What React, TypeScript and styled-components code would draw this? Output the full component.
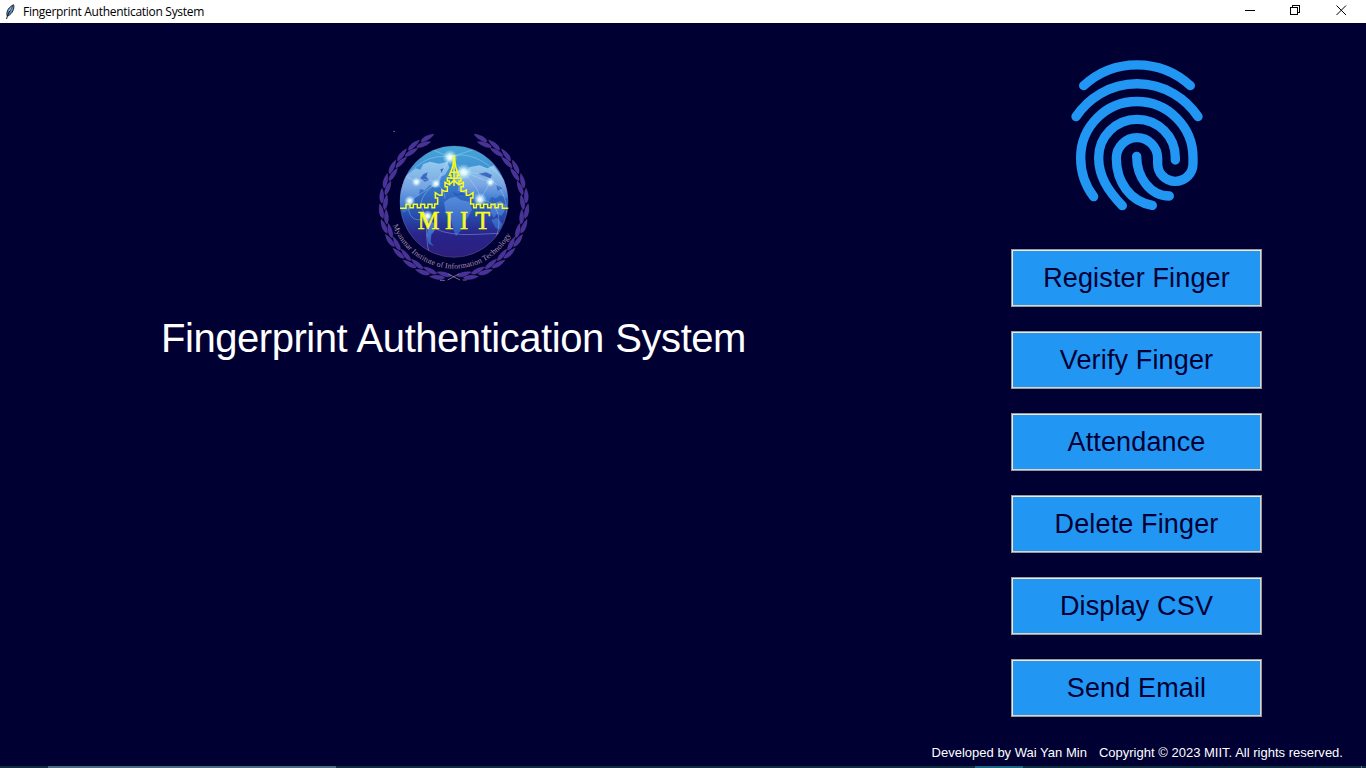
import React from "react";
import styled, { createGlobalStyle } from "styled-components";

const NAVY = "#000033";
const BLUE = "#2196f3";

const GlobalStyle = createGlobalStyle`
  * { box-sizing: border-box; }
  body { margin: 0; background: ${NAVY}; overflow: hidden; }
`;

const Window = styled.div`
  width: 1366px;
  height: 768px;
  display: flex;
  flex-direction: column;
  background: ${NAVY};
  font-family: "Liberation Sans", Arial, sans-serif;
`;

const TitleBar = styled.header`
  height: 23px;
  flex: none;
  display: flex;
  align-items: center;
  padding: 0 2px 0 3px;
  background: #fff;
  color: #000;
`;

const WindowTitle = styled.span`
  flex: 1;
  margin-left: 4px;
  font: 12px/22px "Open Sans", "Noto Sans", sans-serif;
  letter-spacing: -0.29px;
`;

const ControlButton = styled.button`
  width: 45.5px;
  height: 23px;
  padding: 0 0 2px;
  border: 0;
  background: none;
  display: flex;
  align-items: center;
  justify-content: center;
`;

const Content = styled.main`
  flex: 1;
  display: flex;
  min-height: 0;
`;

const Brand = styled.section`
  width: 908px;
  display: flex;
  flex-direction: column;
  align-items: center;
  padding-top: 99px;
`;

const Heading = styled.h1`
  margin: 26px 1px 0 0;
  font-size: 40px;
  line-height: 52px;
  font-weight: 400;
  letter-spacing: -0.46px;
  word-spacing: 1px;
  color: #fff;
  white-space: nowrap;
`;

const Panel = styled.section`
  width: 458px;
  display: flex;
  flex-direction: column;
  align-items: center;
  padding-top: 27px;
`;

const Menu = styled.nav`
  display: flex;
  flex-direction: column;
  gap: 24px;
  margin: 29px 1px 0 0;
`;

const MenuButton = styled.button`
  width: 251px;
  height: 58px;
  padding: 1px 0 0;
  border: 1px solid #9b9a98;
  box-shadow: inset 1px 1px #f3ebe2, inset -1px -1px #d9d4cc;
  background: ${BLUE};
  color: ${NAVY};
  font: 27px "Liberation Sans", Arial, sans-serif;
  letter-spacing: 0.14px;
`;

const Footer = styled.footer`
  align-self: flex-end;
  display: flex;
  gap: 12px;
  margin: 27px 23px 0 0;
  color: #fff;
  font-size: 13px;
  line-height: 17px;
  letter-spacing: 0.01px;
  white-space: nowrap;
`;

const TaskStrip = styled.div`
  height: 2px;
  flex: none;
  display: flex;
  background: #0b2f40;
`;

const TaskSegment = styled.div<{ $width: number; $color?: string }>`
  width: ${(p) => p.$width}px;
  background: ${(p) => p.$color ?? "transparent"};
`;

function Feather() {
  return (
    <svg width="16" height="18" viewBox="0 0 16 18">
      <path d="M4.2 13C2.800 8.500 6 3.700 10.600 1.800C11.700 5.500 9.500 10.500 5 13Z" fill="#5d8fc4" stroke="#20252d" strokeWidth="1" />
      <path d="M3.500 16C4.500 12 6.500 8 9.400 3.500" fill="none" stroke="#111a28" strokeWidth="1" />
      <path d="M6 8L8.400 4.500" stroke="#a8d0f0" strokeWidth="1" />
    </svg>
  );
}

function Fingerprint() {
  return (
    <svg width="155" height="170" viewBox="0 0 465 510">
      <g fill="none" stroke={BLUE} strokeWidth="28" strokeLinecap="round" strokeLinejoin="round">
        <path d="M71 107A236 236 0 0 1 391 107" />
        <path d="M48 200A219 219 0 0 1 414 200" />
        <path d="M101 440C76 407 62 371 62 323A168.5 168.5 0 0 1 399 323V341A53 53 0 0 1 293 341V325A62 62 0 0 0 169 325C169 397 211 454 277 466" />
        <path d="M187 467C143 421 116 378 116 323A115 115 0 0 1 346 323V330" />
        <path d="M230 319C230 381 270 438 328 438" />
      </g>
    </svg>
  );
}

type Leaf = { x: number; y: number; rotate: number };

const wreath: Leaf[] = [];
for (let i = 0; i < 13; i++) {
  for (const side of [-1, 1]) {
    const deg = 98 + i * 12.1 + (side > 0 ? 5 : 0);
    const a = (deg * Math.PI) / 180;
    const r = 212 + side * 6.5;
    wreath.push({
      x: 252 + Math.cos(a) * r,
      y: 252 + Math.sin(a) * (r + 1),
      rotate: deg + 90 - side * 7,
    });
  }
}

const Branch = () => (
  <g fill="#48309f" stroke="#75608f" strokeWidth="1.2" strokeOpacity=".7">
    {wreath.map((l, i) => (
      <path
        key={i}
        d="M-21 1C-14 -8 4 -9 24 0C10 7 -10 8 -21 1Z"
        transform={`translate(${l.x} ${l.y}) rotate(${l.rotate})`}
      />
    ))}
  </g>
);

const halfTemple =
  "M90 259H108V247H120V257H130V247H142V257H152V247H164V257H174V247H186V257H194V246H203V228H196V212L208 220H216V204L224 208H232V194H225V181L238 188V177H232V168H243V160H238L244 146L249 130L252 99";

function Emblem() {
  return (
    <svg width="170" height="164" viewBox="-3 0 510 492">
      <defs>
        <linearGradient id="sea" x1="0" y1="0" x2="0" y2="1">
          <stop offset="0" stopColor="#45acd8" />
          <stop offset=".3" stopColor="#4087d3" />
          <stop offset=".58" stopColor="#2754b4" />
          <stop offset=".77" stopColor="#29258b" />
          <stop offset="1" stopColor="#2d1d7a" />
        </linearGradient>
        <linearGradient id="land" x1="0" y1="0" x2="0" y2="1">
          <stop offset="0" stopColor="#a6d6f2" />
          <stop offset=".5" stopColor="#86aee8" />
          <stop offset="1" stopColor="#2d73d0" />
        </linearGradient>
        <linearGradient id="southLand" x1="0" y1="0" x2="0" y2="1">
          <stop offset="0" stopColor="#5f91df" />
          <stop offset="1" stopColor="#2c65c4" />
        </linearGradient>
        <radialGradient id="glow">
          <stop offset="0" stopColor="#fff" />
          <stop offset=".3" stopColor="#eaffff" stopOpacity=".9" />
          <stop offset="1" stopColor="#a8e8ff" stopOpacity="0" />
        </radialGradient>
        <clipPath id="globe"><ellipse cx="252" cy="239" rx="162" ry="167" /></clipPath>
        <clipPath id="frame"><path d="M0 28H510V474H0Z" /></clipPath>
        <path id="motto" d="M56 239A196 201 0 0 0 448 239" />
      </defs>
      <g clipPath="url(#frame)">
        <Branch />
        <g transform="matrix(-1 0 0 1 504 0)"><Branch /></g>
      </g>
      <path d="M210 475H225M233 474L268 455M270 474L235 456M278 474H290" stroke="#a99abd" strokeWidth="2" />
      <path d="M70 28H75" stroke="#aaa" strokeWidth="2" />
      <g clipPath="url(#globe)">
        <path d="M80 60H430V420H80Z" fill="url(#sea)" />
        <g fill="url(#land)" opacity=".82">
          <path d="M88 202L103 166L137 139L151 143L160 126L180 119L207 125L232 119L238 137L225 158L214 164L206 188L193 197L180 189L164 205L150 201L147 219L134 226L126 246L112 244L118 263L100 272L84 250Z" />
          <path d="M250 150L270 143L281 158L299 135L329 130L352 139L371 130L413 190V231L391 220L378 229L364 224L352 249L337 226L318 231L303 214L281 216L263 205L268 190L251 181Z" />
        </g>
        <g fill="url(#southLand)" opacity=".85">
          <path d="M222 241L239 228L257 224L274 235L298 239L306 264L294 286L282 300L277 320L258 342L249 321L243 292L228 277Z" />
          <path d="M157 293L176 292L199 309L193 327L184 338L182 360L192 373L176 365L170 340L174 320Z" />
          <path d="M361 253L374 244L391 237L408 250L403 268L394 281L380 276L371 288L362 271ZM364 294L381 287L397 306L390 323L377 318Z" />
        </g>
        <g fill="#2757b7" opacity=".8">
          <path d="M160 157L173 151L169 164L178 175L164 179L151 169ZM211 142L222 139L215 154ZM248 210L263 215L278 211L295 223L275 219L257 222ZM324 156L348 151L366 159L361 169L339 162ZM379 188L397 199L383 206Z" />
        </g>
        <g fill="none" stroke="#d2efff" strokeWidth="1.7" opacity=".55">
          <path d="M240 106C185 94 130 126 90 190M240 106C300 79 370 135 401 174M240 106L198 185L119 237M240 106L281 150L361 181L330 233M139 180C179 158 225 193 225 230M119 237C105 290 145 307 173 282C166 327 171 365 179 405M281 150C368 151 411 206 411 275M198 185C152 217 139 254 173 282M330 233C392 237 400 305 370 366M198 321C257 349 339 333 405 334M281 150C310 184 330 208 330 233M139 180L85 150M240 106L180 80M240 106L313 82" />
        </g>
        {[[240,106,23],[281,150,25],[139,180,15],[198,185,15],[119,237,17],[361,181,14],[330,233,21],[173,282,18]].map(([x, y, r]) => (
          <circle key={`${x}-${y}`} cx={x} cy={y} r={r} fill="url(#glow)" />
        ))}
      </g>
      <ellipse cx="252" cy="239" rx="162" ry="167" fill="none" stroke="#807ab0" strokeWidth="1.5" opacity=".7" />
      <g fill="none" stroke="#f8fa20" strokeWidth="4.500">
        <path d={halfTemple} />
        <path d={halfTemple} transform="matrix(-1 0 0 1 505 0)" />
        <path d="M252 99V192M238 188L252 175L266 188M241 169H263M243 151H261" />
      </g>
      <text y="322" fill="#f8fa20" stroke="#f8fa20" strokeWidth="1.800" fontFamily="Liberation Serif, serif" fontSize="73">
        <tspan x="143">M</tspan><tspan x="225">I</tspan><tspan x="270">I</tspan><tspan x="316">T</tspan>
      </text>
      <text fill="#a58ca8" fontFamily="Liberation Serif, serif" fontSize="23.500" letterSpacing=".3">
        <textPath href="#motto" startOffset="72">Myanmar Institute of Information Technology</textPath>
      </text>
    </svg>
  );
}

const actions = ["Register Finger", "Verify Finger", "Attendance", "Delete Finger", "Display CSV", "Send Email"];

export default function App() {
  return (
    <Window>
      <GlobalStyle />
      <TitleBar>
        <Feather />
        <WindowTitle>Fingerprint Authentication System</WindowTitle>
        <ControlButton aria-label="Minimize">
          <svg width="11" height="11" shapeRendering="crispEdges"><path d="M0 5.500H10" stroke="#000" /></svg>
        </ControlButton>
        <ControlButton aria-label="Restore">
          <svg width="11" height="11" fill="none" stroke="#000" shapeRendering="crispEdges">
            <path d="M.5 2.500H7.500V9.500H.5ZM2.500 2.500V.5H9.500V7.500H7.500" />
          </svg>
        </ControlButton>
        <ControlButton aria-label="Close">
          <svg width="11" height="11"><path d="M.5 .5L10 10M10 .5L.5 10" stroke="#000" strokeWidth="1" /></svg>
        </ControlButton>
      </TitleBar>
      <Content>
        <Brand>
          <Emblem />
          <Heading>Fingerprint Authentication System</Heading>
        </Brand>
        <Panel>
          <Fingerprint />
          <Menu>
            {actions.map((label) => <MenuButton key={label}>{label}</MenuButton>)}
          </Menu>
          <Footer>
            <span>Developed by Wai Yan Min</span>
            <span>Copyright © 2023 MIIT. All rights reserved.</span>
          </Footer>
        </Panel>
      </Content>
      <TaskStrip>
        <TaskSegment $width={48} />
        <TaskSegment $width={288} $color="#476d80" />
        <TaskSegment $width={639} />
        <TaskSegment $width={48} $color="#196581" />
        <TaskSegment $width={338} />
        <TaskSegment $width={1} $color="#60777f" />
      </TaskStrip>
    </Window>
  );
}
